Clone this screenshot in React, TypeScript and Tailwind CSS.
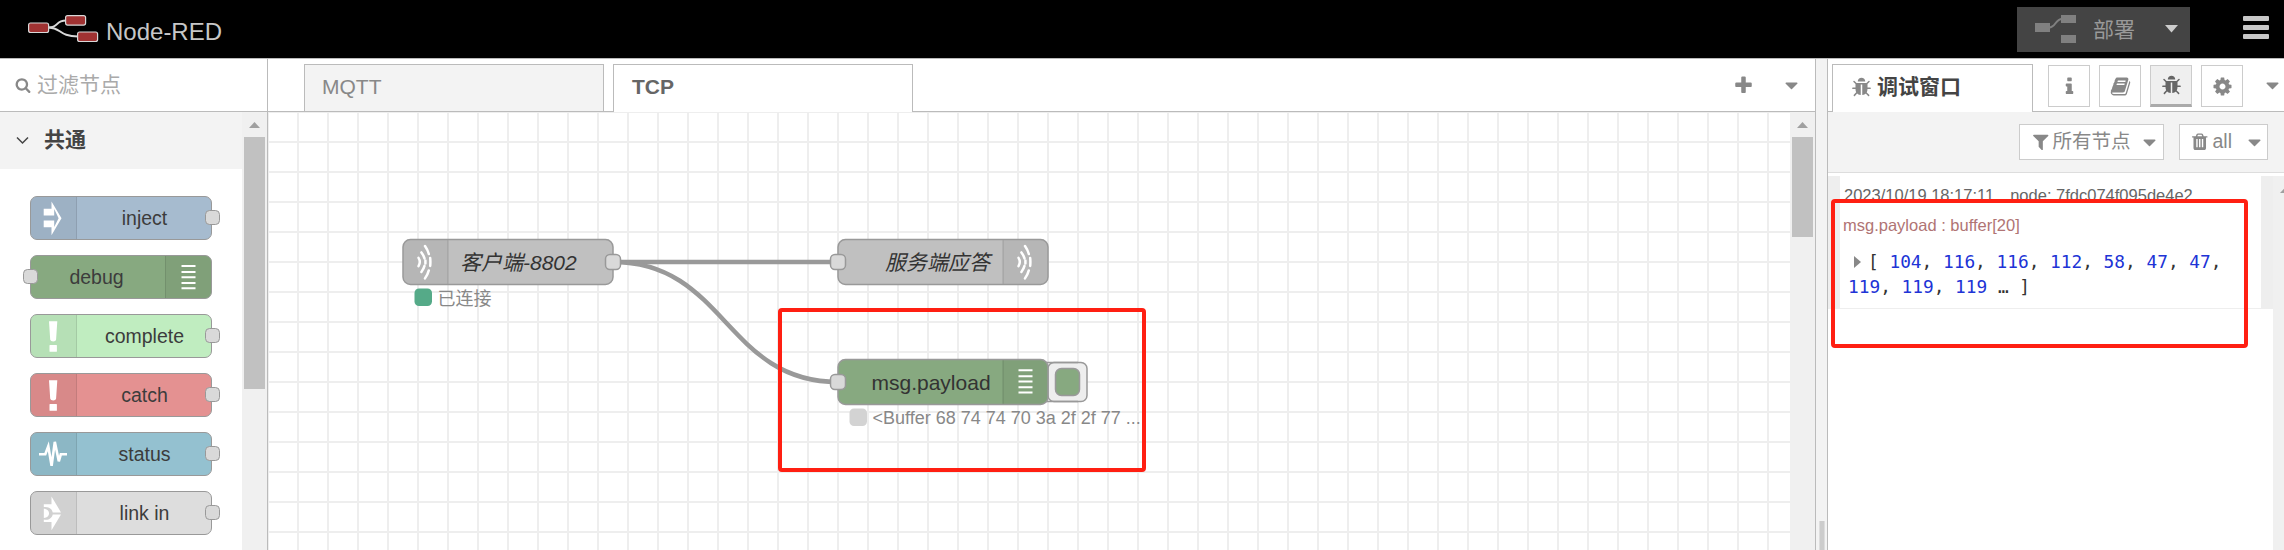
import React from "react";

const P = {
  search: "M1216 832q0-185-131.5-316.5t-316.5-131.5-316.5 131.5-131.5 316.5 131.5 316.5 316.5 131.5 316.5-131.5 131.5-316.5zm512 832q0 52-38 90t-90 38q-54 0-90-38l-343-342q-179 124-399 124-143 0-273.5-55.5t-225-150-150-225-55.5-273.5 55.5-273.5 150-225 225-150 273.5-55.5 273.5 55.5 225 150 150 225 55.5 273.5q0 220-124 399l343 343q37 37 37 90z",
  bug: "M1696 960q0 26-19 45t-45 19h-224q0 171-67 290l208 209q19 19 19 45t-19 45q-18 19-45 19t-45-19l-198-197q-5 5-15 13t-42 28.5-65 36.5-82 29-97 13v-896h-128v896q-51 0-101.5-13.5t-87-33-66-39-43.5-32.5l-15-14-183 207q-20 21-48 21-24 0-43-16-19-18-20.5-44.5t15.5-46.5l202-227q-58-114-58-274h-224q-26 0-45-19t-19-45 19-45 45-19h224v-294l-173-173q-19-19-19-45t19-45 45-19 45 19l173 173h844l173-173q19-19 45-19t45 19 19 45-19 45l-173 173v294h224q26 0 45 19t19 45zm-480-576h-640q0-133 93.5-226.5t226.500-93.5 226.5 93.5 93.5 226.5z",
  info: "M1216 1344v128q0 26-19 45t-45 19h-512q-26 0-45-19t-19-45v-128q0-26 19-45t45-19h64v-384h-64q-26 0-45-19t-19-45v-128q0-26 19-45t45-19h384q26 0 45 19t19 45v576h64q26 0 45 19t19 45zm-128-1152v192q0 26-19 45t-45 19h-256q-26 0-45-19t-19-45v-192q0-26 19-45t45-19h256q26 0 45 19t19 45z",
  book: "M1703 478q40 57 18 129l-275 906q-19 64-76.5 107.5t-122.5 43.5h-923q-77 0-148.5-53.5t-99.5-131.5q-24-67-2-127 0-4 3-27t4-37q1-8-3-21.5t-3-19.5q2-11 8-21t16.5-23.5 16.5-23.5q23-38 45-91.5t30-91.5q3-10 .5-30t-.5-28q3-11 17-28t17-23q21-36 42-92t25-90q1-9-2.5-32t.5-28q4-13 22-30.5t22-22.5q19-26 42.5-84.5t27.5-96.5q1-8-3-25.5t-2-26.5q2-8 9-18t18-23 17-21q8-12 16.5-30.5t15-35 16-36 19.5-32 26.5-23.5 36-11.5 47.5 5.5l-1 3q38-9 51-9h761q74 0 114 56t18 130l-274 906q-36 119-71.5 153.5t-128.5 34.5h-869q-27 0-38 15-11 16-1 43 24 70 144 70h923q29 0 56-15.5t35-41.5l300-987q7-22 5-57 38 15 59 43zm-1064 2q-4 13 2 22.5t20 9.5h608q13 0 25.5-9.5t16.5-22.5l21-64q4-13-2-22.5t-20-9.5h-608q-13 0-25.5 9.5t-16.5 22.5zm-83 256q-4 13 2 22.5t20 9.5h608q13 0 25.5-9.5t16.5-22.5l21-64q4-13-2-22.5t-20-9.5h-608q-13 0-25.5 9.5t-16.5 22.5z",
  cog: "M1152 896q0-106-75-181t-181-75-181 75-75 181 75 181 181 75 181-75 75-181zm512-109v222q0 12-8 23t-20 13l-185 28q-19 54-39 91 35 50 107 138 10 12 10 25t-9 23q-27 37-99 108t-94 71q-12 0-26-9l-138-108q-44 23-91 38-16 136-29 186-7 28-36 28h-222q-14 0-24.5-8.5t-11.5-21.5l-28-184q-49-16-90-37l-141 107q-10 9-25 9-14 0-25-11-126-114-165-168-7-10-7-23 0-12 8-23 15-21 51-66.5t54-70.5q-27-50-41-99l-183-27q-13-2-21-12.5t-8-23.5v-222q0-12 8-23t19-13l186-28q14-46 39-92-40-57-107-138-10-12-10-24 0-10 9-23 26-36 98.5-107.5t94.5-71.5q13 0 26 10l138 107q44-23 91-38 16-136 29-186 7-28 36-28h222q14 0 24.5 8.5t11.5 21.5l28 184q49 16 90 37l142-107q9-9 24-9 13 0 25 10 129 119 165 170 7 8 7 22 0 12-8 23-15 21-51 66.5t-54 70.5q26 50 41 98l183 28q13 2 21 12.5t8 23.5z",
  filter: "M1595 295q17 41-14 70l-493 493v742q0 42-39 59-13 5-25 5-27 0-45-19l-256-256q-19-19-19-45v-486l-493-493q-31-29-14-70 17-39 59-39h1280q42 0 59 39z",
  trash: "M704 1376v-704q0-14-9-23t-23-9h-64q-14 0-23 9t-9 23v704q0 14 9 23t23 9h64q14 0 23-9t9-23zm256 0v-704q0-14-9-23t-23-9h-64q-14 0-23 9t-9 23v704q0 14 9 23t23 9h64q14 0 23-9t9-23zm256 0v-704q0-14-9-23t-23-9h-64q-14 0-23 9t-9 23v704q0 14 9 23t23 9h64q14 0 23-9t9-23zm-544-992h448l-48-117q-7-9-17-11h-317q-10 2-17 11zm928 32v64q0 14-9 23t-23 9h-96v948q0 83-47 143.5t-113 60.5h-832q-66 0-113-58.5t-47-141.5v-952h-96q-14 0-23-9t-9-23v-64q0-14 9-23t23-9h309l70-167q15-37 54-63t79-26h320q40 0 79 26t54 63l70 167h309q14 0 23 9t9 23z",
  plus: "M1600 736v192q0 40-28 68t-68 28h-416v416q0 40-28 68t-68 28h-192q-40 0-68-28t-28-68v-416h-416q-40 0-68-28t-28-68v-192q0-40 28-68t68-28h416v-416q0-40 28-68t68-28h192q40 0 68 28t28 68v416h416q40 0 68 28t28 68z",
  caret: "M1408 704q0 26-19 45l-448 448q-19 19-45 19t-45-19l-448-448q-19-19-19-45t19-45 45-19h896q26 0 45 19t19 45z",
};

function Fa({ d, className }: { d: string; className: string }) {
  return (
    <svg viewBox="0 0 1792 1792" fill="currentColor" className={`shrink-0 ${className}`}>
      <path d={d} />
    </svg>
  );
}

/* Node glyphs, drawn in a 45 x 44 box */
type Glyph = "inject" | "debug" | "alert" | "status" | "link" | "tcp";
function NodeGlyph({ kind }: { kind: Glyph }) {
  switch (kind) {
    case "inject":
      return <path fill="#fff" fillRule="evenodd" d="M12.7 11.800h7.800V4.500L30.500 21.200 20.500 38.200V30.200H12.700v-6.600H23.200v6.400l4.400-8.800-4.400-9.200V18.400H12.700z" />;
    case "debug":
      return <path stroke="#fff" strokeWidth="2" d="M15.5 10h14M15.5 16h14M15.5 21.2h14M15.5 27h14M15.5 32.3h14" />;
    case "alert":
      return <path fill="#fff" d="M18 6.3h8.3L25.1 24.6c-.2 2.6-5.6 2.6-5.9 0zM19 30h6.4q.5 0 .5.5v5.7q0 .5-.5.5H19q-.5 0-.5-.5v-5.7q0-.5.5-.5z" />;
    case "status":
      return <path fill="none" stroke="#fff" strokeWidth="2.6" strokeLinejoin="miter" d="M8 21.3h6.3l3-8 3.3 19.5 3.2-24 4 19.5 2-7H36" />;
    case "link":
      return (
        <g fill="#fff">
          <path d="M12.8 12.3h7.7V4.5L30 20.4h-8.3c-.8-4-4.5-6-8.9-5.4z" />
          <path d="M12.8 29.9h7.7v8.4L30 22.6h-8.3c-.8 4-4.500 6-8.900 5z" />
          <path d="M12.8 16.8c7 .2 7 9 0 9.2z" />
        </g>
      );
    case "tcp":
      return (
        <g fill="none" stroke="#fff" strokeWidth="2.500" strokeLinecap="round">
          <path d="M15.500 17.700q2.600 4 0 8.200" />
          <path d="M18.400 12.200q2.300 3 3.100 6M22.400 20.400v3M21.500 25.700q-.8 3-3.100 6" />
          <path d="M22 5.800q2.800 4 3.800 8M27.200 17.800q.4 4 0 8M25.800 30.200q-1 4-3.800 8" />
        </g>
      );
  }
}

const palette: { label: string; bg: string; kind: Glyph; sink?: boolean }[] = [
  { label: "inject", bg: "bg-[#a6bbcf]", kind: "inject" },
  { label: "debug", bg: "bg-[#87a980]", kind: "debug", sink: true },
  { label: "complete", bg: "bg-[#c0edc0]", kind: "alert" },
  { label: "catch", bg: "bg-[#e49191]", kind: "alert" },
  { label: "status", bg: "bg-[#94c1d0]", kind: "status" },
  { label: "link in", bg: "bg-[#dddddd]", kind: "link" },
];

function PaletteNode({ label, bg, kind, sink }: (typeof palette)[number]) {
  return (
    <div className={`relative flex h-[44px] w-[182px] shrink-0 rounded-[7px] border border-[#999] ${bg} ${sink ? "flex-row-reverse" : ""}`}>
      <div className={`h-full w-[46px] shrink-0 bg-black/5 ${sink ? "rounded-r-[6px] border-l" : "rounded-l-[6px] border-r"} border-black/10`}>
        <svg className="h-[42px] w-[45px]" viewBox="0 0 45 42"><NodeGlyph kind={kind} /></svg>
      </div>
      <div className={`flex-1 text-center text-[19.5px] leading-[42px] text-[#3c3c3c] ${sink ? "pr-[3px]" : "pl-px"}`}>{label}</div>
      <div className={`absolute top-[13px] size-[15px] rounded-[4.5px] border border-[#999] bg-[#d9d9d9] ${sink ? "-left-[8px]" : "-right-[9px]"}`} />
    </div>
  );
}

function Port({ x, y }: { x: number; y: number }) {
  return <rect x={x - 7.5} y={y - 7.5} width="15" height="15" rx="4.5" fill="#d9d9d9" stroke="#999" strokeWidth="1.5" />;
}

function FlowNode({ x, y, fill, kind, right }: { x: number; y: number; fill: string; kind: Glyph; right?: boolean }) {
  return (
    <g transform={`translate(${x} ${y})`}>
      <rect width="210" height="45" rx="7.5" fill={fill} stroke="#999" strokeWidth="1.5" />
      {right ? (
        <>
          <path d="M165 .75h37.5a6.75 6.75 0 0 1 6.75 6.75v30a6.75 6.75 0 0 1-6.75 6.75H165z" fill="#000" fillOpacity=".05" />
          <path d="M165 .75v43.5" stroke="#000" strokeOpacity=".1" strokeWidth="1.5" />
          <g transform="translate(165 .7)"><NodeGlyph kind={kind} /></g>
        </>
      ) : (
        <>
          <path d="M45 .75H7.5A6.75 6.75 0 0 0 .75 7.5v30a6.75 6.75 0 0 0 6.75 6.75H45z" fill="#000" fillOpacity=".05" />
          <path d="M45 .75v43.5" stroke="#000" strokeOpacity=".1" strokeWidth="1.5" />
          <g transform="translate(0 .7)"><NodeGlyph kind={kind} /></g>
        </>
      )}
    </g>
  );
}

/* Flow canvas: node places are content on a free canvas of 1522 x 438 */
function Canvas() {
  return (
    <svg width="1522" height="438" viewBox="0 0 1522 438" className="block shrink-0">
      <defs>
        <pattern id="grid" width="30" height="30" patternUnits="userSpaceOnUse">
          <path d="M0 0h30v1H1v29H0zM29 1h1v29h-1zM1 29h28v1H1z" fill="#eee" />
        </pattern>
      </defs>
      <rect width="1522" height="438" fill="#fff" />
      <rect width="1522" height="438" fill="url(#grid)" />
      <g fill="none" stroke="#999" strokeWidth="4.5">
        <path d="M345 150H570" />
        <path d="M345 150C457.5 150 457.5 270 570 270" />
      </g>
      <FlowNode x={135} y={127.5} fill="#c0c0c0" kind="tcp" />
      <FlowNode x={570} y={127.5} fill="#c0c0c0" kind="tcp" right />
      <rect x="780" y="250.5" width="39" height="39" rx="6" fill="#eee" stroke="#999" strokeWidth="1.5" />
      <path d="M770 250.5h40M770 289.5h40" stroke="#999" strokeWidth="1.5" />
      <rect x="787.5" y="256.5" width="24" height="27" rx="6" fill="#87a980" stroke="#999" strokeWidth="1.5" />
      <FlowNode x={570} y={247.5} fill="#87a980" kind="debug" right />
      <Port x={345} y={150} />
      <Port x={570} y={150} />
      <Port x={570} y={270} />
      <rect x="146.5" y="176.5" width="17.5" height="17.5" rx="4.5" fill="#5a8" />
      <rect x="581.5" y="296.5" width="17.5" height="17.5" rx="4.5" fill="#d3d3d3" />
      <g fill="#333" fontSize="21">
        <text x="192" y="157.5" fontStyle="italic">客户端-8802</text>
        <text x="617" y="157.5" fontStyle="italic">服务端应答</text>
        <text x="603.5" y="277.500">msg.payload</text>
      </g>
      <g fill="#888" fontSize="18">
        <text x="169.5" y="192.500">已连接</text>
        <text x="604.5" y="312">&lt;Buffer 68 74 74 70 3a 2f 2f 77 ...</text>
      </g>
      <rect x="512" y="198" width="364" height="160" rx="2" fill="none" stroke="#ff1f12" strokeWidth="4" />
    </svg>
  );
}

function Scrollbar({ thumb }: { thumb: string }) {
  return (
    <div className="flex h-full w-[25px] shrink-0 flex-col items-center bg-[#f0f0f0]">
      <svg width="25" height="25" viewBox="0 0 25 25" className="shrink-0"><path d="M7 16h11l-5.500-6z" fill="#a0a0a0" /></svg>
      <div className={`w-[21px] shrink-0 bg-[#c1c1c1] ${thumb}`} />
    </div>
  );
}

const N = ({ children }: { children: React.ReactNode }) => <span className="text-[#2033d6]">{children}</span>;

function Header() {
  return (
    <header className="flex h-[58px] shrink-0 items-center bg-black pl-[27px] text-[#c7c7c7]">
      <svg width="72" height="30" viewBox="27 17 72 30" className="shrink-0">
        <g fill="none" stroke="#d8d8d8" strokeWidth="2">
          <path d="M49 30.500C59 30.500 55 23.500 66 23.500" />
          <path d="M49 30.500C61 30.500 59 39.500 78 39.500" />
        </g>
        <g fill="#a03232" stroke="#d8d8d8" strokeWidth="1.200">
          <rect x="28.600" y="26" width="20" height="9.500" rx="2" />
          <rect x="65.600" y="18.600" width="20" height="9.500" rx="2" />
          <rect x="77.600" y="35" width="20" height="9.500" rx="2" />
        </g>
      </svg>
      <span className="ml-[7px] pt-[5px] text-[24px] leading-[30px]">Node-RED</span>
      <div className="ml-auto flex h-[45px] w-[173px] items-center bg-[#444] pl-[18px]">
        <svg width="42" height="28" viewBox="0 0 42 28" fill="#808080" className="shrink-0">
          <path d="M0 8h15v9H0zM26 0h15v8H26zM26 20h15v8H26z" />
          <path d="M14 12.500c7 0 6-8.500 13-8.500" fill="none" stroke="#808080" strokeWidth="2" />
        </svg>
        <span className="ml-[16px] text-[21px] leading-[45px] text-[#999]">部署</span>
        <svg width="13" height="8" viewBox="0 0 13 8" className="ml-[30px]"><path d="M0 0h13L6.500 7.500z" fill="#ccc" /></svg>
      </div>
      <div className="mr-[15px] ml-[53px] flex w-[26px] flex-col gap-[4px] pb-[3px]">
        <div className="h-[5px] rounded-[1px] bg-[#c7c7c7]" />
        <div className="h-[5px] rounded-[1px] bg-[#c7c7c7]" />
        <div className="h-[5px] rounded-[1px] bg-[#c7c7c7]" />
      </div>
    </header>
  );
}

function Palette() {
  return (
    <aside className="flex w-[268px] shrink-0 flex-col border-r border-[#bbb]">
      <div className="flex h-[53px] shrink-0 items-center border-b border-[#bbb] pl-[15px] text-[#888]">
        <Fa d={P.search} className="size-[16px]" />
        <span className="ml-[6px] text-[21px] text-[#aaa]">过滤节点</span>
      </div>
      <div className="flex min-h-0 flex-1">
        <div className="flex w-[242px] flex-col">
          <div className="flex h-[57px] shrink-0 items-center bg-[#f3f3f3] pl-[16px] text-[#444]">
            <svg width="13" height="9" viewBox="0 0 13 9"><path d="M1 1.500l5.500 5.500L12 1.500" fill="none" stroke="#444" strokeWidth="1.500" /></svg>
            <span className="ml-[15px] pb-[2px] text-[21px] font-bold">共通</span>
          </div>
          <div className="flex flex-col gap-[15px] pt-[27px] pl-[30px]">
            {palette.map((n) => <PaletteNode key={n.label} {...n} />)}
          </div>
        </div>
        <Scrollbar thumb="h-[252px]" />
      </div>
    </aside>
  );
}

function Workspace() {
  return (
    <main className="flex w-[1548px] shrink-0 flex-col border-r border-[#bbb]">
      <div className="flex h-[53px] shrink-0 text-[21px]">
        <div className="w-[36px] border-b border-[#bbb]" />
        <div className="mt-[5px] w-[300px] border border-[#bbb] bg-[#f3f3f3] pl-[17px] leading-[44px] text-[#888]">MQTT</div>
        <div className="w-[9px] border-b border-[#bbb]" />
        <div className="mt-[5px] w-[300px] border border-b-0 border-[#bbb] pl-[18px] leading-[44px] font-bold text-[#666]">TCP</div>
        <div className="flex flex-1 items-center border-b border-[#bbb] pl-[820px] text-[#888]">
          <Fa d={P.plus} className="size-[21px]" />
          <Fa d={P.caret} className="ml-[27px] size-[21px]" />
        </div>
      </div>
      <div className="flex min-h-0 flex-1">
        <Canvas />
        <Scrollbar thumb="h-[100px]" />
      </div>
    </main>
  );
}

function Sidebar() {
  const box = "flex h-[42px] w-[42px] items-center justify-center border border-[#ccc]";
  return (
    <aside className="relative flex min-w-0 flex-1 flex-col">
      <div className="flex h-[53px] shrink-0 text-[#888]">
        <div className="w-[4px] border-b border-[#bbb]" />
        <div className="mt-[5px] flex w-[201px] items-center border border-b-0 border-[#bbb] pb-[3px] pl-[18px]">
          <Fa d={P.bug} className="size-[21px]" />
          <span className="ml-[5px] text-[21px] font-bold text-[#444]">调试窗口</span>
        </div>
        <div className="flex flex-1 gap-[9px] overflow-hidden border-b border-[#bbb] pt-[6px] pl-[15px]">
          <div className={box}><Fa d={P.info} className="size-[21px]" /></div>
          <div className={box}><Fa d={P.book} className="size-[21px]" /></div>
          <div className="flex h-[42px] w-[42px] items-center justify-center border border-b-[3px] border-[#ccc] border-b-[#aaa] bg-[#efefef] text-[#666]"><Fa d={P.bug} className="size-[21px]" /></div>
          <div className={box}><Fa d={P.cog} className="size-[21px]" /></div>
          <Fa d={P.caret} className="mt-[10px] ml-[10px] size-[21px]" />
        </div>
      </div>
      <div className="flex h-[61px] shrink-0 items-start justify-end gap-[15px] border-b border-[#ddd] bg-[#f3f3f3] pt-[12px] pr-[16px] text-[19.500px] text-[#888]">
        <div className="flex h-[36px] w-[145px] items-center border border-[#ccc] bg-white pl-[11px]">
          <Fa d={P.filter} className="size-[19.500px]" />
          <span className="ml-[2px]">所有节点</span>
          <Fa d={P.caret} className="ml-[8px] size-[21px]" />
        </div>
        <div className="flex h-[36px] w-[89px] items-center border border-[#ccc] bg-white pl-[10px]">
          <Fa d={P.trash} className="size-[19.500px]" />
          <span className="ml-[3px]">all</span>
          <Fa d={P.caret} className="ml-[12px] size-[21px]" />
        </div>
      </div>
      <div className="flex min-h-0 flex-1 pt-[3px]">
        <div className="flex-1">
          <div className="h-[133px] border-b border-[#eee]">
            <div className="h-[132px] border-x-[12px] border-[#eee] pt-[9px] pl-[3px] text-[16.500px] whitespace-nowrap">
              <div className="flex h-[20px] gap-[16px] pl-px leading-[20px] text-[#666]">
                <span>2023/10/19 18:17:11</span>
                <span>node: 7fdc074f095de4e2</span>
              </div>
              <div className="mt-[10px] h-[20px] leading-[20px] text-[#b07474]">msg.payload : buffer[20]</div>
              <div className="mt-[14px] pl-[5px] font-['DejaVu_Sans_Mono',monospace] text-[17.800px] leading-[25px] whitespace-pre text-[#333]">
                <div className="flex items-center">
                  <svg width="7" height="12" viewBox="0 0 7 12" className="ml-[6px]"><path d="M0 0v12l7-6z" fill="#888" /></svg>
                  <span className="ml-[7px]">[ <N>104</N>, <N>116</N>, <N>116</N>, <N>112</N>, <N>58</N>, <N>47</N>, <N>47</N>,</span>
                </div>
                <div><N>119</N>, <N>119</N>, <N>119</N> … ]</div>
              </div>
            </div>
          </div>
        </div>
        <div className="w-[11px] overflow-hidden bg-[#f0f0f0]">
          <svg width="25" height="25" viewBox="0 0 25 25"><path d="M7 17h11l-5.500-6z" fill="#a0a0a0" /></svg>
        </div>
      </div>
      <div className="absolute top-[140px] left-[3px] h-[149px] w-[417px] rounded-[4px] border-4 border-[#ff1f12]" />
    </aside>
  );
}

export default function App() {
  return (
    <div className="flex h-[550px] w-[2284px] flex-col overflow-hidden bg-white font-['Liberation_Sans','Noto_Sans_CJK_SC',sans-serif]">
      <Header />
      <div className="flex min-h-0 flex-1 border-t border-[#bbb]">
        <Palette />
        <Workspace />
        <div className="flex w-[12px] shrink-0 flex-col items-center justify-end border-r border-[#bbb] bg-[#f3f3f3]">
          <div className="h-[29px] w-[6px] border-x border-[#ddd] bg-[#ccc]" />
        </div>
        <Sidebar />
      </div>
    </div>
  );
}
